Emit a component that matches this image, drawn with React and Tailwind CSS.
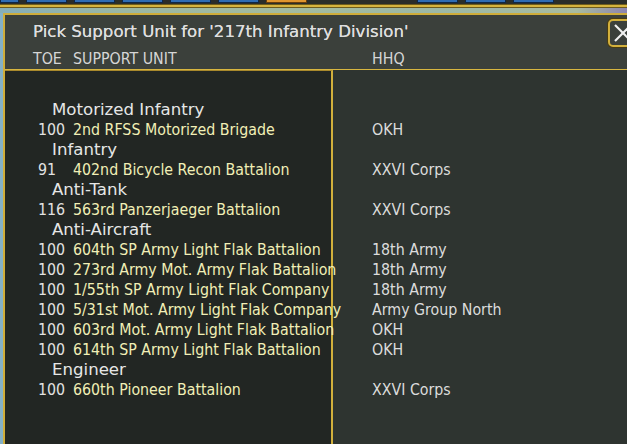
const groups = [
  { name: 'Motorized Infantry', units: [['100', '2nd RFSS Motorized Brigade', 'OKH']] },
  { name: 'Infantry', units: [['91', '402nd Bicycle Recon Battalion', 'XXVI Corps']] },
  { name: 'Anti-Tank', units: [['116', '563rd Panzerjaeger Battalion', 'XXVI Corps']] },
  {
    name: 'Anti-Aircraft',
    units: [
      ['100', '604th SP Army Light Flak Battalion', '18th Army'],
      ['100', '273rd Army Mot. Army Flak Battalion', '18th Army'],
      ['100', '1/55th SP Army Light Flak Company', '18th Army'],
      ['100', '5/31st Mot. Army Light Flak Company', 'Army Group North'],
      ['100', '603rd Mot. Army Light Flak Battalion', 'OKH'],
      ['100', '614th SP Army Light Flak Battalion', 'OKH'],
    ],
  },
  { name: 'Engineer', units: [['100', '660th Pioneer Battalion', 'XXVI Corps']] },
];

const rowFont = "font-['DejaVu_Sans_Condensed','DejaVu_Sans',sans-serif] [font-stretch:condensed] text-[15.8px]";
const headFont = "font-['DejaVu_Sans',sans-serif] text-[16.6px]";

function Tab({ w = 'w-[41px]', orange = false }) {
  return (
    <div
      className={`${w} h-[3px] border-x border-b ${
        orange ? 'bg-[#e0962e] border-[#6a3e0c]' : 'bg-[#2e6cb4] border-[#0f2748]'
      }`}
    />
  );
}

export default function App() {
  return (
    <div className="w-[627px] h-[444px] overflow-hidden bg-[#2a2d29] flex flex-col">
      <div className="h-[4px] shrink-0 flex items-start gap-[7px]">
        <Tab w="w-[19px]" />
        <Tab />
        <Tab />
        <Tab />
        <Tab />
        <Tab />
        <Tab orange />
        <div className="w-[96px]" />
        <Tab />
        <Tab />
        <Tab />
      </div>
      <div className="h-[4px] shrink-0 bg-[#d6b43e] border-y border-[#6e5c1c]" />
      <div className="h-[5px] shrink-0 bg-[linear-gradient(90deg,#86aeb8_0%,#9bb7a4_20%,#a3bba0_45%,#9cb8a6_70%,#a9bca0_92%,#8c84b0_100%)]" />
      <div className="flex-1 flex min-h-0">
        <div className="w-[3px] shrink-0 bg-[#84b0c6]" />
        <div className="relative flex-1 flex flex-col border-l-2 border-t-2 border-[#cfad3a] bg-[#3b403b]">
          <div className="shrink-0 pl-[28px] pt-[7px] border-b border-[#d8b640]">
            <div className={`${headFont} leading-[20px] text-[#dedede] whitespace-nowrap [text-shadow:0_0_0.4px_#dedede]`}>
              Pick Support Unit for '217th Infantry Division'
            </div>
            <div className={`${rowFont} mt-[7px] leading-[20px] text-[#d6d6d6] flex whitespace-nowrap`}>
              <span className="w-[40px]">TOE</span>
              <span className="w-[299px]">SUPPORT UNIT</span>
              <span>HHQ</span>
            </div>
          </div>
          <div className="flex-1 flex min-h-0">
            <div className="relative z-[1] w-[328px] shrink-0 bg-[#222623] border-t border-r-2 border-t-[#a8892c] border-r-[#d2b03c] pl-[33px] pt-[29px]">
              {groups.map((g) => (
                <div key={g.name}>
                  <div className={`${headFont} h-[20px] leading-[20px] pl-[14px] text-[#e6e6e6] whitespace-nowrap`}>
                    {g.name}
                  </div>
                  {g.units.map((u) => (
                    <div key={u[1]} className={`${rowFont} h-[20px] leading-[20px] flex whitespace-nowrap`}>
                      <span className="w-[35px] shrink-0 text-[#e2e2e2]">{u[0]}</span>
                      <span className="text-[#f1efb6]">{u[1]}</span>
                    </div>
                  ))}
                </div>
              ))}
            </div>
            <div className="flex-1 bg-[#2e3430] pl-[39px] pt-[30px]">
              {groups.map((g) => (
                <div key={g.name}>
                  <div className="h-[20px]" />
                  {g.units.map((u) => (
                    <div key={u[1]} className={`${rowFont} h-[20px] leading-[20px] text-[#dcdcdc] whitespace-nowrap`}>
                      {u[2]}
                    </div>
                  ))}
                </div>
              ))}
            </div>
          </div>
          <div className="absolute z-[2] left-[603px] top-[4px] w-[28px] h-[28px] rounded-[5px] border-2 border-[#d2b03c] bg-[#3b403b] shadow-[0_0_0_1px_#4a3c10]">
            <svg width="24" height="24" viewBox="0 0 24 24" className="block">
              <line x1="5" y1="4" x2="21" y2="20" stroke="#f2f2f2" strokeWidth="2.2" />
              <line x1="21" y1="4" x2="5" y2="20" stroke="#f2f2f2" strokeWidth="2.2" />
            </svg>
          </div>
        </div>
      </div>
    </div>
  );
}
